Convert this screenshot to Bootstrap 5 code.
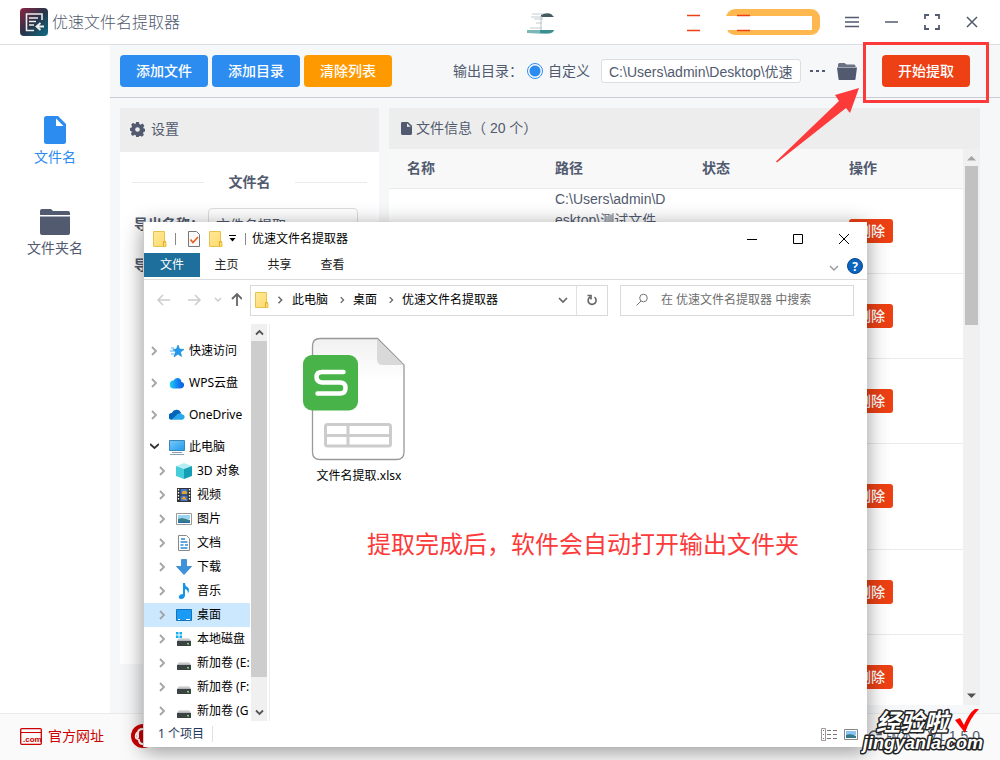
<!DOCTYPE html>
<html lang="zh-CN">
<head>
<meta charset="utf-8">
<meta name="viewport" content="width=device-width, initial-scale=1">
<title>优速文件名提取器</title>
<link href="https://cdn.jsdelivr.net/npm/bootstrap@5.3.0/dist/css/bootstrap.min.css" rel="stylesheet">
<style>
  :root { --ink:#515a6e; --line:#dcdee2; --blue:#2d8cf0; --red:#ed4014; }
  body { font:14px/21px "Liberation Sans","Noto Sans CJK SC",sans-serif; color:var(--ink); background:#fff; }
  svg { display:block; flex:none; }
  .min-h-0 { min-height:0; }
  .titlebar { height:45px; border-bottom:1px solid var(--line); padding:0 8px 0 20px; }
  .app-name { font-size:16px; line-height:24px; font-weight:300; margin-left:4px; padding-top:2px; }
  .promo { margin-right:12px; }
  .sys-btn { width:40px; height:44px; padding:0; border:0; color:var(--ink); display:flex; align-items:center; justify-content:center; }
  .side { width:110px; padding-top:71px; gap:41px; }
  .side a { color:var(--ink); text-decoration:none; display:flex; flex-direction:column; align-items:center; gap:3px; }
  .side a.active { color:var(--blue); }
  .work { background:#f5f7f9; }
  .toolbar { height:53px; border-bottom:1px solid #c9ccd2; padding:0 30px 0 10px; gap:4px; }
  .tool-btn { width:88px; height:32px; padding:0; font-size:14px; line-height:20px; font-weight:500; border:0; border-radius:4px; color:#fff; }
  .tool-btn:hover { color:#fff; }
  .bg-blue { background:var(--blue) !important; }
  .bg-orange { background:#f90 !important; }
  .bg-red { background:var(--red) !important; }
  .out-radio { width:16px; height:16px; margin:0 5px 0 0; appearance:none; border:1px solid var(--blue); border-radius:50%; background:radial-gradient(circle,var(--blue) 5px,#fff 6px); }
  .out-path { width:200px; height:24px; min-height:0; margin:0 8px 0 11px; padding:0 7px; font-size:14px; line-height:22px; border-color:var(--line); border-radius:3px; color:var(--ink); }
  .icon-btn { padding:0; border:0; color:var(--ink); }
  .start { margin-left:25px; position:relative; z-index:3; }
  .start-frame { position:absolute; inset:-13px -19px -16px; border:3px solid #fd3a3a; pointer-events:none; }
  .start-arrow { position:absolute; right:105px; top:31px; pointer-events:none; }
  .panels { padding:10px 20px 8px 10px; gap:10px; }
  .settings { width:259px; margin-bottom:41px; }
  .set-row { padding-left:14px; margin-top:15px; }
  .set-row + .set-row { margin-top:9px; }
  .head-bar { background:#ededed; padding:0 10px; }
  .head-44 { height:44px; gap:6px; padding-bottom:2px; }
  .head-41 { height:41px; }
  .rule { height:1px; background:#e8eaec; width:72px; }
  .set-input { width:150px; height:32px; padding:0 7px; font-size:14px; border-color:var(--line); border-radius:4px; color:var(--ink); }
  .files { min-width:0; }
  .file-table { table-layout:fixed; width:100%; }
  .file-table th { height:39px; width:147px; padding:0 18px; background:#f8f8f9; border-bottom:1px solid #e8eaec; }
  .file-table th:first-child { width:148px; }
  .file-table th:last-child { width:auto; }
  .file-table td { height:85px; padding:0 18px; border-bottom:1px solid #e8eaec; word-break:break-all; vertical-align:middle; }
  .file-table .tall td { height:106px; }
  .file-table td.path-cell { vertical-align:top; padding-right:17px; }
  .del-btn { width:44px; height:24px; padding:0; font-size:14px; line-height:20px; font-weight:500; border:0; border-radius:3px; color:#fff; }
  .app-scroll { width:17px; background:#f0f0f0; padding:6px 0; }
  .app-thumb { width:13px; height:159px; background:#c1c1c1; margin-top:5px; }
  .foot { height:47px; background:#fafafa; border-top:1px solid #e8eaec; padding:0 20px 2px; }
  .foot a { color:#c00; text-decoration:none; }
  .foot-link { gap:6px; width:87px; }

  /* folder window floating over the application */
  .explorer { position:absolute; left:143px; right:133px; top:222px; bottom:13px; z-index:2; background:#fff; color:#000; border-left:1px solid #ccc;
    box-shadow:0 4px 20px rgba(0,0,0,.42); font:12px/16px "Noto Sans","Noto Sans CJK SC",sans-serif; }
  .ex-title { height:31px; padding:2px 0 0 9px; }
  .ex-sep { width:1px; height:12px; background:#888; }
  .ex-drop { margin:0 8px 0 6px; }
  .ex-name { margin-left:6px; }
  .ex-win { width:46px; height:29px; padding:0; border:0; color:#000; display:flex; align-items:center; justify-content:center; }
  .ex-tabs { height:27px; border-bottom:1px solid #dadbdc; padding-right:4px; }
  .ex-tab { width:53px; height:24px; padding:0; border:0; background:none; color:#222; font-size:12px; }
  .ex-tab.main { width:56px; background:#1e6f9b; color:#fff; }
  .ex-nav { padding:5px 13px 0 12px; height:36px; }
  .ex-box { height:31px; border:1px solid #d9d9d9; }
  .ex-search { width:234px; margin-left:12px; padding-left:14px; gap:8px; }
  .ex-search input { border:0; outline:0; width:170px; padding:0; font-size:12px; }
  .ex-search input::placeholder { color:#6d6d6d; opacity:1; }
  .tree { width:106px; padding-top:15px; overflow:hidden; }
  .tree a { display:flex; align-items:center; height:24px; padding-left:7px; color:#000; text-decoration:none; white-space:nowrap; gap:10px; }
  .tree a.top { margin-bottom:8px; gap:11px; }
  .tree a.open { margin-bottom:0; gap:10px; padding-left:6px; }
  .tree a.sub { padding-left:15px; }
  .tree a.picked { background:#cce8ff; }
  .tree a span { margin-left:-5px; }
  .tree a.top span { margin-left:-7px; }
  .ex-scroll { width:16px; background:#f0f0f0; margin-left:1px; }
  .ex-thumb { background:#cdcdcd; flex:1; margin-bottom:27px; }
  .ex-files { border-left:1px solid #eee; margin-left:2px; padding:11px 0 0 31px; }
  .xls { width:116px; color:#000; text-decoration:none; }
  .note { font-size:24px; line-height:36px; color:#fd3a3a; margin:42px 0 0 66px; white-space:nowrap; }
  .ex-status { height:26px; padding:0 9px 0 14px; color:#1e395b; }
  .logo-mark { position:absolute; right:8px; bottom:0; z-index:4; pointer-events:none; }
</style>
</head>
<body class="vh-100 d-flex flex-column overflow-hidden position-relative">
<svg width="0" height="0" class="position-absolute" aria-hidden="true">
  <defs>
    <linearGradient id="gLogo" x1="0" y1="0" x2="1" y2="1"><stop offset="0" stop-color="#8e2340"/><stop offset=".5" stop-color="#283449"/><stop offset="1" stop-color="#0c6f86"/></linearGradient>
    <linearGradient id="gFold" x1="0" y1="0" x2="1" y2="1"><stop offset="0" stop-color="#ffe99a"/><stop offset="1" stop-color="#ffd968"/></linearGradient>
    <linearGradient id="gScr" x1="0" y1="0" x2="1" y2="1"><stop offset="0" stop-color="#7cc8f8"/><stop offset="1" stop-color="#1c9cf0"/></linearGradient>
    <linearGradient id="gDrive" x1="0" y1="0" x2="0" y2="1"><stop offset="0" stop-color="#e8e8e8"/><stop offset="1" stop-color="#a8abae"/></linearGradient>
    <linearGradient id="gCloud" x1="0" y1="0" x2="1" y2="0"><stop offset="0" stop-color="#21d4e8"/><stop offset=".5" stop-color="#1687f5"/><stop offset="1" stop-color="#0a5ae0"/></linearGradient>
  </defs>
  <symbol id="folder" viewBox="0 0 14 16"><path d="M.5.5h11v11h1.500v4H.5z" fill="url(#gFold)" stroke="#e8c34c"/><path d="M10.500 15v-4.500h2.500" fill="none" stroke="#e0b030"/></symbol>
  <symbol id="chev" viewBox="0 0 7 10"><path d="M1 1l4 4-4 4" fill="none" stroke="#a3a3a3" stroke-width="1.800"/></symbol>
  <symbol id="crumb" viewBox="0 0 7 10"><path d="M1 1l4 4-4 4" fill="none" stroke="#666" stroke-width="1.800"/></symbol>
  <symbol id="drive" viewBox="0 0 16 16"><path d="M3 7h10l2 3H1z" fill="url(#gDrive)"/><path d="M1 10h14v5H1z" fill="#3d4144"/><path d="M11 12h2v1.500h-2z" fill="#5dea5d"/></symbol>
  <symbol id="dark-folder" viewBox="0 0 30 26"><path d="M0 2Q0 0 2 0h9l2 2h15q2 0 2 2v2H0zM0 7.500h30V24q0 2-2 2H2q-2 0-2-2z" fill="currentColor"/></symbol>
</svg>

<header class="titlebar d-flex align-items-center">
  <svg width="28" height="28" viewBox="0 0 28 28"><rect width="28" height="28" rx="4" fill="url(#gLogo)"/><path d="M22 12V6H6.500v16.500H14M9 10h9M9 13.500h7M9 17h5" fill="none" stroke="#eee" stroke-width="1.600"/><path d="M24 18.500h-7m3.500-3.500L16.500 18.500l4 3.500" fill="none" stroke="#eee" stroke-width="1.800"/></svg>
  <span class="app-name me-auto">优速文件名提取器</span>
  <svg class="promo" width="293" height="26" viewBox="527 9 293 26"><path d="M532 14h15M531 17h12M534 19h9M536 23h6M530 28h12" stroke="#c5ccd0" stroke-width="1"/><path d="M541 15q6-3 10-1l3 3h-13z" fill="#445a61"/><path d="M541 16v14" stroke="#b9c2c5"/><path d="M527 30h27q-1 4-8 4l-19-1z" fill="#7db7b7"/><path d="M540 30h14q-1 3-5 3h-9z" fill="#3b8f92"/>
    <rect x="726" y="9" width="94" height="26" rx="9" fill="#ffb84f"/><path d="M724 16h88v14h-88z" fill="#fff"/><path d="M687 15.500h13M687 30.500h13M737 15.500h13M737 30.500h13" stroke="#ed4014" stroke-width="1.300"/></svg>
  <button class="btn sys-btn" aria-label="菜单"><svg width="16" height="12" viewBox="0 0 16 12"><path d="M1 1.500h14M1 6h14M1 10.500h14" stroke="currentColor" stroke-width="1.500"/></svg></button>
  <button class="btn sys-btn" aria-label="最小化"><svg width="14" height="4"><path d="M0 2h13" stroke="currentColor" stroke-width="1.500"/></svg></button>
  <button class="btn sys-btn" aria-label="全屏"><svg width="16" height="16" viewBox="0 0 16 16"><path d="M1 5V1h4M11 1h4v4M15 11v4h-4M5 15H1v-4" fill="none" stroke="currentColor" stroke-width="1.800"/></svg></button>
  <button class="btn sys-btn" aria-label="关闭"><svg width="12" height="12" viewBox="0 0 12 12"><path d="M1 1l10 10M11 1L1 11" stroke="currentColor" stroke-width="1.500"/></svg></button>
</header>

<main class="d-flex flex-fill min-h-0">
  <nav class="side d-flex flex-column flex-shrink-0">
    <a href="#" class="active"><svg width="22" height="28" viewBox="0 0 22 28"><path d="M2.500 0H14l8 8v17.500q0 2.500-2.500 2.500h-17Q0 28 0 25.500v-23Q0 0 2.500 0z" fill="currentColor"/><path d="M12 2.500v7.500h7.500z" fill="#fff"/></svg><span>文件名</span></a>
    <a href="#"><svg width="30" height="26"><use href="#dark-folder"/></svg><span>文件夹名</span></a>
  </nav>
  <section class="work flex-fill d-flex flex-column min-h-0">
    <div class="toolbar d-flex align-items-center flex-shrink-0">
      <button class="btn tool-btn bg-blue">添加文件</button>
      <button class="btn tool-btn bg-blue">添加目录</button>
      <button class="btn tool-btn bg-orange">清除列表</button>
      <div class="d-flex align-items-center ms-auto">
        <span>输出目录：</span>
        <input class="out-radio ms-1" type="radio" id="custom" name="out" checked>
        <label for="custom">自定义</label>
        <input class="form-control out-path" type="text" aria-label="输出目录" value="C:\Users\admin\Desktop\优速">
        <button class="btn icon-btn me-2 pe-1" aria-label="更多"><svg width="16" height="4"><path d="M1 1h3v2H1zM7 1h3v2H7zM13 1h3v2h-3z" fill="currentColor"/></svg></button>
        <button class="btn icon-btn" aria-label="打开目录"><svg width="20" height="17" viewBox="0 0 20 17"><path d="M1 4V1.500Q1 0 2.500 0h5l2 1.500H17q1.500 0 1.500 1.500v1z" fill="currentColor" opacity=".85"/><path d="M0 4.500h20L18.500 16q0 1-1 1h-15q-1 0-1-1z" fill="currentColor"/></svg></button>
        <div class="start">
          <button class="btn tool-btn bg-red d-block">开始提取</button>
          <div class="start-frame"></div>
          <svg class="start-arrow" width="90" height="78" viewBox="775 86 90 78"><path d="M776 161.500L839 101l-4-6 24-7-9 25-4-5-69 54.500z" fill="#fd3a3a"/></svg>
        </div>
      </div>
    </div>
    <div class="panels d-flex flex-fill min-h-0">
      <section class="settings bg-white flex-shrink-0">
        <div class="head-bar head-44 d-flex align-items-center">
          <svg width="15" height="15" viewBox="0 0 16 16"><path fill="currentColor" fill-rule="evenodd" d="M6.500 0h3l.5 2.200 1.300.6 2-1.200 2 2.100-1.100 2 .5 1.100 1.300.4v3l-1.600.4-.5 1.300 1 1.800-2.100 2.100-2-1.100-1.100.4L9.300 16H6.600l-.5-1.800-1.200-.5-2 1.200-2-2.200 1-1.900L1.400 9.600 0 9.300v-3l1.700-.5.5-1.200-1-1.700 2-2.100 2 1.200L6.200 1.500zM8 5.500a2.500 2.500 0 1 0 0 5 2.500 2.500 0 0 0 0-5z"/></svg><span>设置</span>
        </div>
        <div class="d-flex align-items-center justify-content-between px-2 mx-1 mt-3 pt-1 fw-bold"><span class="rule"></span><span>文件名</span><span class="rule"></span></div>
        <div class="set-row d-flex align-items-center"><label class="fw-bold" for="expName">导出名称：</label><input class="form-control set-input ms-1" id="expName" value="文件名提取"></div>
        <div class="set-row d-flex align-items-center"><label class="fw-bold" for="expType">导出格式：</label><input class="form-control set-input ms-1" id="expType" value="xlsx"></div>
      </section>
      <section class="files bg-white flex-fill d-flex flex-column">
        <div class="head-bar head-41 d-flex align-items-center flex-shrink-0 ps-2">
          <svg class="ms-1" width="11" height="13" viewBox="0 0 22 28" preserveAspectRatio="none"><path d="M2.500 0H14l8 8v17.500q0 2.500-2.500 2.500h-17Q0 28 0 25.500v-23Q0 0 2.500 0z" fill="currentColor"/><path d="M12 2.500v7.500h7.500z" fill="#eee"/></svg><span class="ps-1">文件信息（ 20 个）</span>
        </div>
        <div class="d-flex flex-fill min-h-0">
          <div class="flex-fill overflow-hidden">
            <table class="file-table">
              <thead><tr><th>名称</th><th>路径</th><th>状态</th><th>操作</th></tr></thead>
              <tbody>
                <tr><td></td><td class="path-cell">C:\Users\admin\Desktop\测试文件</td><td><svg width="18" height="18"><circle cx="9" cy="9" r="9" fill="#19a15f"/></svg></td><td><button class="btn del-btn bg-red">删除</button></td></tr>
                <tr><td></td><td></td><td></td><td><button class="btn del-btn bg-red">删除</button></td></tr>
                <tr><td></td><td></td><td></td><td><button class="btn del-btn bg-red">删除</button></td></tr>
                <tr class="tall"><td></td><td></td><td></td><td><button class="btn del-btn bg-red">删除</button></td></tr>
                <tr><td></td><td></td><td></td><td><button class="btn del-btn bg-red">删除</button></td></tr>
                <tr><td></td><td></td><td></td><td><button class="btn del-btn bg-red">删除</button></td></tr>
              </tbody>
            </table>
          </div>
          <div class="app-scroll d-flex flex-column align-items-center flex-shrink-0">
            <svg width="9" height="6"><path d="M0 5.500L4.500 1 9 5.500z" fill="#a3a3a3"/></svg>
            <div class="app-thumb"></div>
            <svg class="mt-auto" width="9" height="6"><path d="M0 .5L4.500 5 9 .5z" fill="#505050"/></svg>
          </div>
        </div>
      </section>
    </div>
  </section>
</main>

<footer class="foot d-flex align-items-center flex-shrink-0">
  <a href="#" class="foot-link d-flex align-items-center"><svg width="22" height="17" viewBox="0 0 22 17"><rect x=".7" y=".7" width="20.600" height="15.600" rx="1" fill="none" stroke="#c00" stroke-width="1.300"/><path d="M1 4.500h20" stroke="#c00"/><text x="3" y="14" font-size="8" font-weight="bold" fill="#c00" font-family="Liberation Sans">.com</text></svg><span>官方网址</span></a>
  <a href="#" class="ms-4" aria-label="客服"><svg width="24" height="24" viewBox="0 0 24 24"><circle cx="12" cy="12" r="12" fill="#c00"/><path d="M7 14V9q0-4 5-4t5 4v5M7 8q-3 2-2 6l3 2q0 4 4 4" fill="none" stroke="#fff" stroke-width="2"/></svg></a>
  <span class="ms-auto d-flex align-items-center gap-1"><svg width="14" height="14" viewBox="0 0 14 14"><path d="M1 7q1-5 6-5 3 0 5 3M13 1v4.500H8.500" fill="none" stroke="currentColor" stroke-width="1.600"/></svg>版本：V1.1.5.0</span>
</footer>

<section class="explorer d-flex flex-column" aria-label="输出文件夹">
  <div class="ex-title d-flex align-items-center">
    <svg width="14" height="16"><use href="#folder"/></svg><span class="ex-sep ms-2 me-2"></span>
    <svg class="ms-1 me-2" width="13" height="16" viewBox="1 0 13 16"><path d="M1.500.5h8l3 3v12h-11z" fill="#f9f9f9" stroke="#777"/><path d="M3.500 8.500l2.500 3 5-5.500" fill="none" stroke="#f05a1a" stroke-width="1.600"/></svg>
    <svg width="14" height="16"><use href="#folder"/></svg>
    <svg class="ex-drop" width="8" height="7"><path d="M0 .5h7" stroke="#000"/><path d="M.5 3h6l-3 3.500z"/></svg>
    <span class="ex-sep"></span><span class="ex-name me-auto">优速文件名提取器</span>
    <button class="btn ex-win" aria-label="最小化"><svg width="10" height="10"><path d="M0 5.500h10" stroke="#000"/></svg></button>
    <button class="btn ex-win" aria-label="最大化"><svg width="10" height="10"><path d="M.5.5h9v9h-9z" fill="none" stroke="#000"/></svg></button>
    <button class="btn ex-win" aria-label="关闭"><svg width="10" height="10"><path d="M0 0l10 10M10 0L0 10" stroke="#000"/></svg></button>
  </div>
  <div class="ex-tabs d-flex">
    <button class="ex-tab main">文件</button><button class="ex-tab">主页</button><button class="ex-tab">共享</button><button class="ex-tab me-auto">查看</button>
    <svg class="mt-2 pt-1 me-2" width="10" height="11" viewBox="0 0 10 7"><path d="M1 1l4 4 4-4" fill="none" stroke="#999" stroke-width="1.400"/></svg>
    <svg class="mt-1" width="16" height="18" viewBox="0 0 16 18"><circle cx="8" cy="9" r="7.500" fill="#0a64c0" stroke="#084a8c"/><text x="8" y="13.500" text-anchor="middle" font-size="12" font-weight="bold" fill="#fff">?</text></svg>
  </div>
  <div class="ex-nav d-flex align-items-center">
    <svg width="86" height="16" viewBox="155 293 86 16"><g fill="none" stroke="#ccc" stroke-width="1.500"><path d="M169 301h-12m5-5l-5 5 5 5M187 301h12m-5-5l5 5-5 5M214 299l3 3 3-3"/></g><path d="M236 307v-12m-5 5l5-5 5 5" fill="none" stroke="#666" stroke-width="1.800"/></svg>
    <div class="ex-box d-flex align-items-center flex-fill ms-2 ps-1 gap-2">
      <svg width="14" height="16"><use href="#folder"/></svg><svg width="7" height="8"><use href="#crumb"/></svg><span>此电脑</span><svg width="5" height="8" class="ms-1"><use href="#crumb"/></svg><span>桌面</span><svg width="5" height="8" class="ms-1"><use href="#crumb"/></svg><span class="me-auto">优速文件名提取器</span>
      <svg width="10" height="7"><path d="M1 1l4 4 4-4" fill="none" stroke="#666" stroke-width="1.700"/></svg>
      <button class="btn rounded-0 border-0 border-start p-0 h-100 d-flex align-items-center px-2" aria-label="刷新"><svg width="14" height="12" viewBox="0 0 14 12"><path d="M9.500 3.200A4 4 0 1 1 5 3M2.500 1.500H6v4" fill="none" stroke="#666" stroke-width="1.600"/></svg></button>
    </div>
    <div class="ex-box ex-search d-flex align-items-center"><svg width="14" height="14" viewBox="0 0 14 14"><circle cx="8.500" cy="5" r="3.800" fill="none" stroke="#777"/><path d="M6 8l-4.500 4.500" stroke="#777"/></svg><input class="ms-1" type="text" aria-label="搜索" placeholder="在 优速文件名提取器 中搜索"></div>
  </div>
  <div class="d-flex flex-fill min-h-0 pt-1 mt-1">
    <nav class="tree flex-shrink-0">
      <a href="#" class="top"><svg width="7" height="10"><use href="#chev"/></svg><svg width="16" height="16" viewBox="0 0 16 16"><path d="M9 2l1.500 4L15 6.500 11.500 9l1 4.500L9 11l-4 3 1.500-5L4 6.500l3.500-.5z" fill="#1e9bf0" stroke="#137cc8" stroke-width=".6"/><path d="M2 5h3M1 8h4M2 11h3" stroke="#4db0f2"/></svg><span>快速访问</span></a>
      <a href="#" class="top"><svg width="7" height="10"><use href="#chev"/></svg><svg width="16" height="16" viewBox="0 0 16 16"><path d="M5 13.500a4 4 0 0 1-.5-8Q6 2.500 9 3t3.500 4q3 .5 2.500 3.500t-4 3z" fill="url(#gCloud)"/></svg><span>WPS云盘</span></a>
      <a href="#" class="top"><svg width="7" height="10"><use href="#chev"/></svg><svg width="16" height="16" viewBox="0 0 17 16"><path d="M3 13a3.500 3.500 0 0 1 0-7q1-3 4.500-3.500Q11 2 13 6z" fill="#0364b8"/><path d="M3 13l6-6q4-2 5 .500 3 .5 2.500 3T14 13z" fill="#28a8ea"/></svg><span>OneDrive</span></a>
      <a href="#" class="top open"><svg width="9" height="7"><path d="M0 1l4.500 4L9 1" fill="none" stroke="#333" stroke-width="1.800"/></svg><svg width="17" height="16" viewBox="0 0 17 16"><path d="M.5 1.500h15v10H.5z" fill="url(#gScr)" stroke="#3d87b8"/><path d="M3 13.500h10M1 15.500h14" stroke="#8aa0b0"/></svg><span>此电脑</span></a>
      <a href="#" class="sub"><svg width="7" height="10"><use href="#chev"/></svg><svg width="16" height="16" viewBox="0 0 16 16"><path d="M0 3l8-3 8 3-8 3z" fill="#b7eef2"/><path d="M0 3l8 3v10l-8-3z" fill="#45cdda"/><path d="M16 3L8 6v10l8-3z" fill="#159fb4"/></svg><span>3D 对象</span></a>
      <a href="#" class="sub"><svg width="7" height="10"><use href="#chev"/></svg><svg width="16" height="16" viewBox="0 0 16 16"><path d="M1 1h14v14H1z" fill="#333"/><path d="M4.500 2h7v5.500h-7zM4.500 8.500h7V14h-7z" fill="#3e75cf"/><path d="M6 5q2-3 5 0v2H6zM5 12l3-3 3 4z" fill="#e7a52c"/><path d="M2.500 2v12M13.500 2v12" stroke="#fff" stroke-width="1.300" stroke-dasharray="1.500"/></svg><span>视频</span></a>
      <a href="#" class="sub"><svg width="7" height="10"><use href="#chev"/></svg><svg width="16" height="16" viewBox="0 0 16 16"><path d="M.5 2.500h15v11H.5z" fill="#fff" stroke="#999"/><path d="M2 4h12v4H2z" fill="#9ad4f5"/><path d="M2 8l4-1 8 2v3H2z" fill="#3a7f86"/><path d="M2 10.500h12V12H2z" fill="#296ca8"/></svg><span>图片</span></a>
      <a href="#" class="sub"><svg width="7" height="10"><use href="#chev"/></svg><svg width="16" height="16" viewBox="0 0 16 16"><path d="M2.500.5h8l3 3v12h-11z" fill="#fff" stroke="#888"/><path d="M5 4h4M4.500 7h7M4.500 10h3M9 10h3M4.500 13h7" stroke="#2b8bd6" stroke-width="1.500"/></svg><span>文档</span></a>
      <a href="#" class="sub"><svg width="7" height="10"><use href="#chev"/></svg><svg width="16" height="16" viewBox="0 0 16 16"><path d="M5.500.5h5v7h5L8 15.500.5 7.500h5z" fill="#3b93dd" stroke="#2878bd" stroke-width=".7"/></svg><span>下载</span></a>
      <a href="#" class="sub"><svg width="7" height="10"><use href="#chev"/></svg><svg width="16" height="16" viewBox="0 0 16 16"><path d="M7 0h2q0 3 3 4.500 2 2 0 6 0-4-3-4.500v6.500Q8.500 16 5 16q-3-.5-2-3 1-2 4-2z" fill="#1496e8"/></svg><span>音乐</span></a>
      <a href="#" class="sub picked"><svg width="7" height="10"><use href="#chev"/></svg><svg width="16" height="16" viewBox="0 0 16 16"><path d="M.5 2.500h15v11H.5z" fill="#1a9cf5" stroke="#1273ba"/><path d="M2 12.500h2M10 12.500h4" stroke="#fff"/></svg><span>桌面</span></a>
      <a href="#" class="sub"><svg width="7" height="10"><use href="#chev"/></svg><svg width="16" height="16" viewBox="0 0 16 16"><use href="#drive"/><path d="M0 1h2.500v2.500H0zM3.500 1H6v2.500H3.500zM0 4.500h2.500V7H0zM3.500 4.500H6V7H3.500z" fill="#12aef0"/></svg><span>本地磁盘</span></a>
      <a href="#" class="sub"><svg width="7" height="10"><use href="#chev"/></svg><svg width="16" height="16"><use href="#drive"/></svg><span>新加卷 (E:</span></a>
      <a href="#" class="sub"><svg width="7" height="10"><use href="#chev"/></svg><svg width="16" height="16"><use href="#drive"/></svg><span>新加卷 (F:</span></a>
      <a href="#" class="sub"><svg width="7" height="10"><use href="#chev"/></svg><svg width="16" height="16"><use href="#drive"/></svg><span>新加卷 (G</span></a>
    </nav>
    <div class="ex-scroll d-flex flex-column align-items-center flex-shrink-0">
      <svg class="my-1" width="9" height="9" viewBox="0 0 9 9"><path d="M1 6.500L4.500 3 8 6.500" fill="none" stroke="#555" stroke-width="1.800"/></svg>
      <div class="ex-thumb w-100"></div>
      <svg class="my-1" width="9" height="9" viewBox="0 0 9 9"><path d="M1 2.500L4.500 6 8 2.500" fill="none" stroke="#555" stroke-width="1.800"/></svg>
    </div>
    <div class="ex-files flex-fill">
      <a href="#" class="xls d-block text-center">
        <svg class="d-block" width="108" height="133" viewBox="301 335 108 133"><defs><linearGradient id="gDoc" x1="0" y1="0" x2="0" y2="1"><stop offset="0" stop-color="#f1f1f1"/><stop offset=".35" stop-color="#fff"/></linearGradient></defs>
          <path d="M320 338.500h57.500L404 365v87q0 7.500-7.500 7.500H320q-7.500 0-7.500-7.500v-106q0-7.500 7.500-7.500z" fill="url(#gDoc)" stroke="#999" stroke-width="1.300"/><path d="M377 339v20q0 6 6 6h20.500z" fill="#d9d9d9"/>
          <rect x="303" y="355" width="55" height="55.500" rx="9" fill="#48b348"/><path d="M343.500 372H322q-5.500 0-5.500 5t5.500 5.500h18q5.500 0 5.500 5.500t-5.500 5.500H317.500" fill="none" stroke="#fff" stroke-width="4.500" stroke-linecap="round"/>
          <rect x="325.500" y="424.500" width="65" height="21.500" rx="2" fill="none" stroke="#ccc" stroke-width="3"/><path d="M326 435.500h65M348 424v22" stroke="#ccc" stroke-width="3"/></svg>
        <span>文件名提取.xlsx</span>
      </a>
      <p class="note">提取完成后，软件会自动打开输出文件夹</p>
    </div>
  </div>
  <div class="ex-status d-flex align-items-center">
    <span>1 个项目</span><span class="border-start ms-2 me-auto">&nbsp;</span>
    <svg width="37" height="13" viewBox="0 0 37 13"><path d="M.5.500h4v12h-4z" fill="none" stroke="#999"/><path d="M2 2.500h1M2 6.500h1M2 10.500h1" stroke="#c44"/><path d="M6 2.500h4M12 2.500h4M6 6.500h4M12 6.500h4M6 10.500h4M12 10.500h4" stroke="#777"/><path d="M23.500 1.500h13v10h-13z" fill="#fff" stroke="#888"/><path d="M25 3h10v4H25z" fill="#8cc4f4"/><path d="M25 7q5-2 10 1v2H25z" fill="#34788a"/></svg>
  </div>
</section>

<svg class="logo-mark" width="132" height="54" viewBox="860 706 132 54" aria-label="经验啦">
  <g fill="#fff" stroke="#222" stroke-width="3" paint-order="stroke" stroke-linejoin="round" font-style="italic">
    <text x="876" y="731" font-size="24" font-weight="700" font-family="Noto Sans CJK SC">经验啦</text>
    <text x="863" y="749" font-size="18" font-weight="700" font-family="Liberation Sans">jingyanla.com</text>
  </g>
  <path d="M955 720l5-2 4 7q5-12 11-16h4q-9 9-14 24z" fill="#f00"/>
</svg>
<script src="https://cdn.jsdelivr.net/npm/bootstrap@5.3.0/dist/js/bootstrap.bundle.min.js"></script>
</body>
</html>
